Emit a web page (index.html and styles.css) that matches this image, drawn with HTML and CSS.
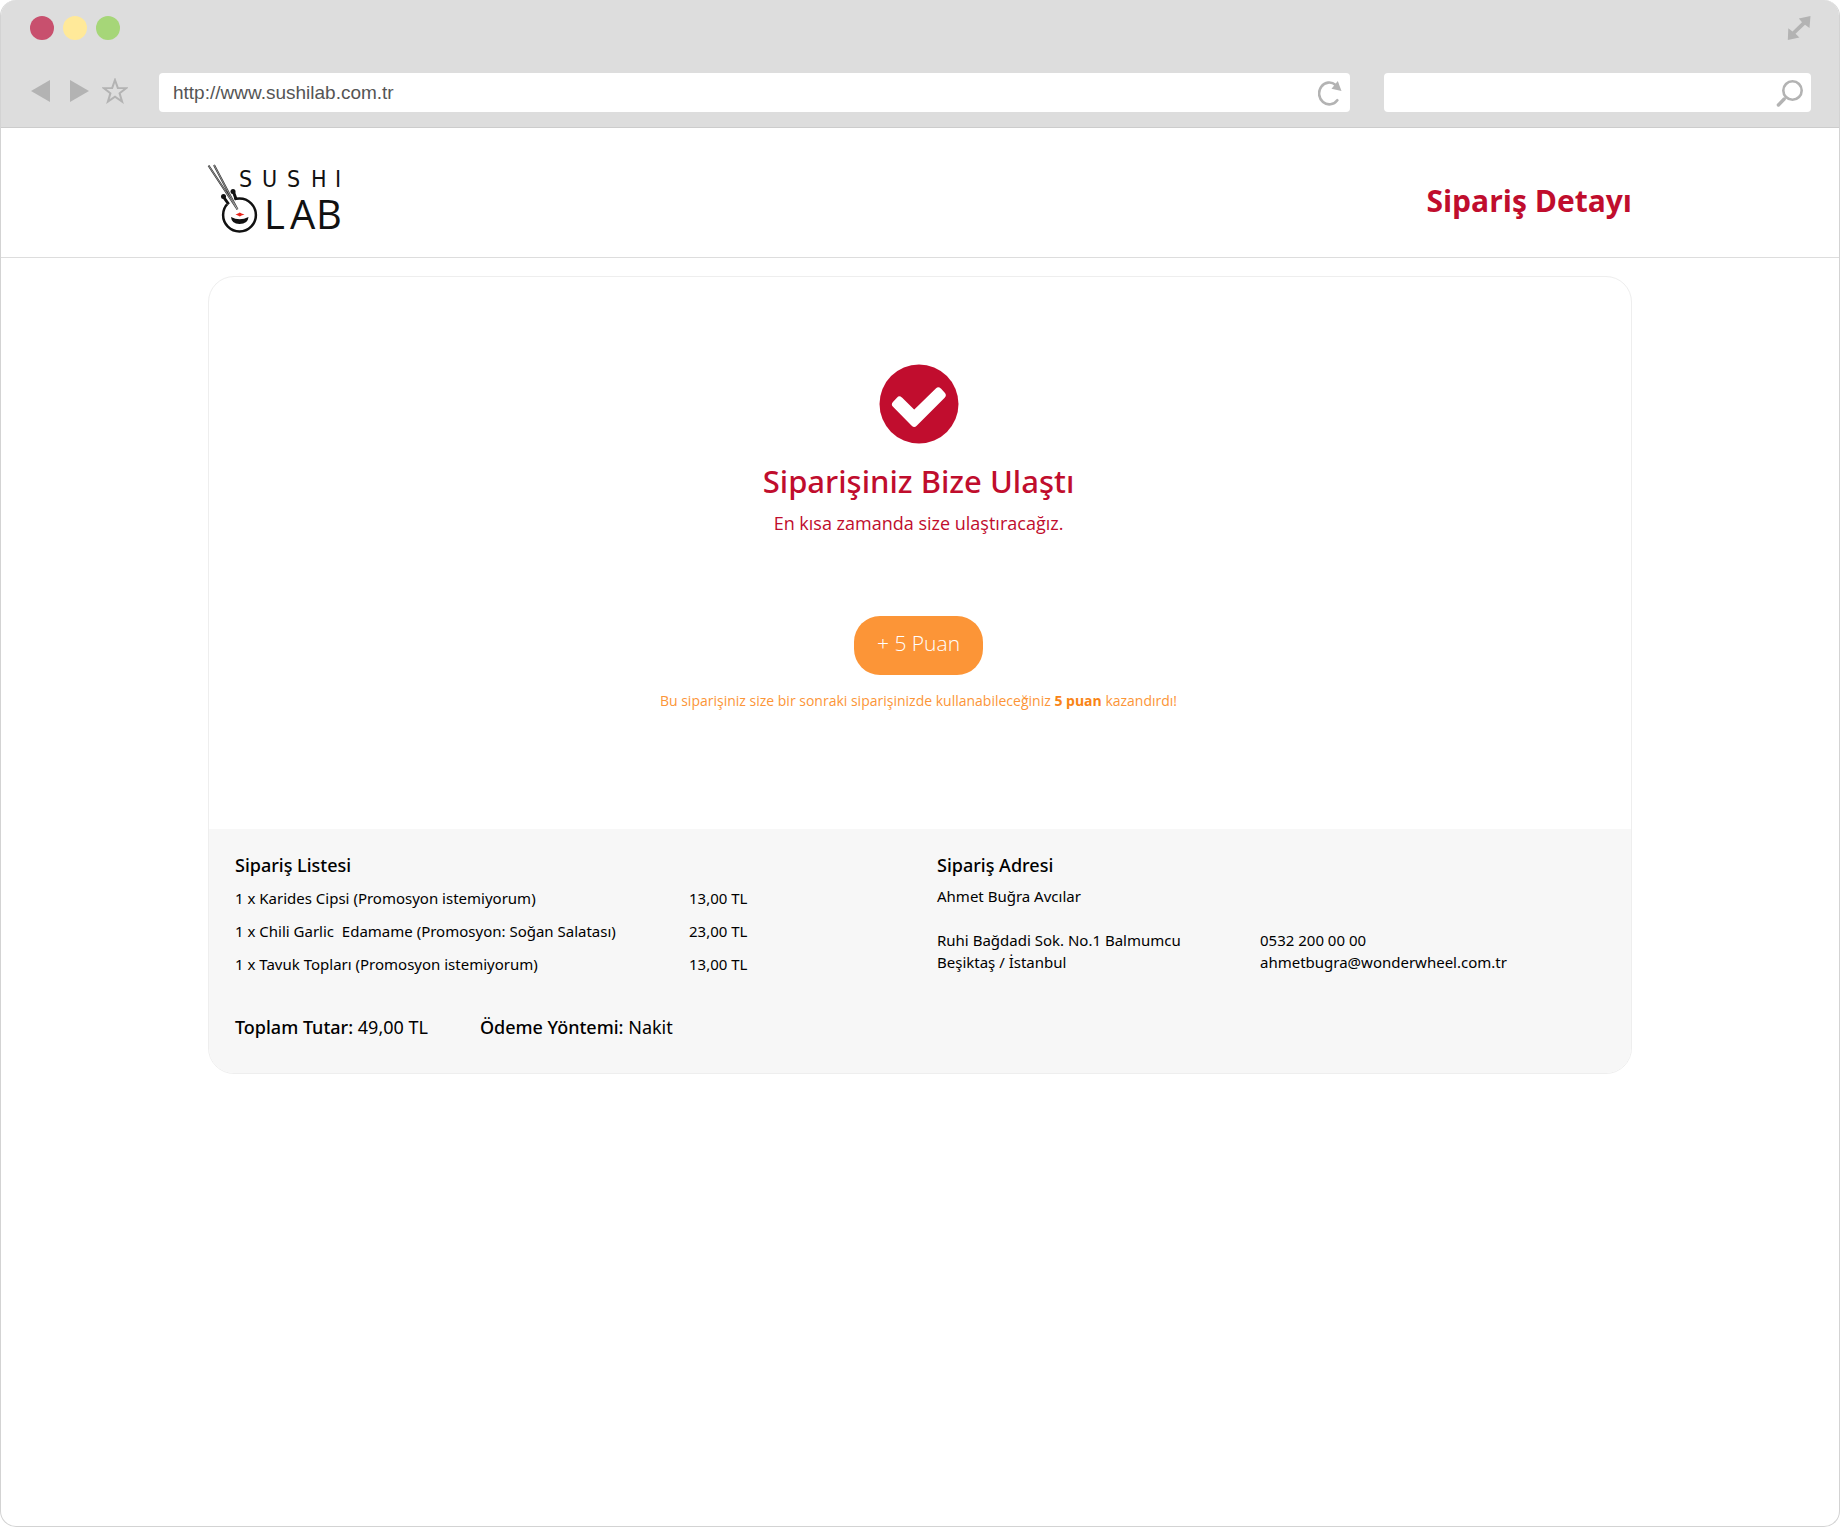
FILE: index.html
```html
<!DOCTYPE html>
<html lang="tr">
<head>
    <meta charset="UTF-8">
    <meta name="viewport" content="width=device-width, initial-scale=1.0">
    <title>Sushi Lab - Sipariş Detayı</title>
    <link rel="stylesheet" href="styles.css">
</head>
<body>
    <div class="window">
        <!-- Browser bar -->
        <div class="browser-bar">
            <div class="window-buttons">
                <button type="button" class="dot dot-close" aria-label="Kapat"></button>
                <button type="button" class="dot dot-minimize" aria-label="Küçült"></button>
                <button type="button" class="dot dot-zoom" aria-label="Büyüt"></button>
                <button type="button" class="icon-btn expand-btn" aria-label="Tam ekran">
                    <svg width="24" height="24" viewBox="0 0 24 24">
                        <path d="M23.5 0 L22.5 12 L18 8.7 L8.5 17.8 L12.4 21.5 L0.8 24 L1.3 12.2 L5.5 15.5 L15 6.2 L11.8 2.5 Z" fill="#b3b3b3"/>
                    </svg>
                </button>
            </div>
            <div class="navigation">
                <div class="nav-buttons">
                    <button type="button" class="icon-btn" aria-label="Geri">
                        <svg width="19" height="22" viewBox="0 0 19 22"><path d="M0 11 L19 0 V22 Z" fill="#b3b3b3"/></svg>
                    </button>
                    <button type="button" class="icon-btn" aria-label="İleri">
                        <svg width="19" height="22" viewBox="0 0 19 22"><path d="M19 11 L0 0 V22 Z" fill="#b3b3b3"/></svg>
                    </button>
                    <button type="button" class="icon-btn star-btn" aria-label="Yer imi">
                        <svg width="26" height="26" viewBox="0 0 26 26">
                            <path d="M13 2 L15.8 9.9 L24.2 10.1 L17.6 15.3 L20.1 23.6 L13 18.7 L5.9 23.6 L8.4 15.3 L1.8 10.1 L10.2 9.9 Z" fill="none" stroke="#b3b3b3" stroke-width="2"/>
                        </svg>
                    </button>
                </div>
                <div class="field address-field">
                    <input type="text" value="http://www.sushilab.com.tr" aria-label="Adres">
                    <button type="button" class="icon-btn" aria-label="Yenile">
                        <svg width="24" height="26" viewBox="0 0 24 26">
                            <path d="M19.3 20.2 A10.2 10.9 0 1 1 17.6 4.9" fill="none" stroke="#b3b3b3" stroke-width="2.6" stroke-linecap="round"/>
                            <path d="M19.8 1 L23.5 11 L13.5 8.8 Z" fill="#b3b3b3"/>
                        </svg>
                    </button>
                </div>
                <div class="field search-field">
                    <input type="text" aria-label="Ara">
                    <button type="button" class="icon-btn" aria-label="Ara">
                        <svg width="27" height="28" viewBox="0 0 27 28">
                            <circle cx="16.5" cy="11.5" r="9.2" fill="none" stroke="#b3b3b3" stroke-width="2.6"/>
                            <path d="M8.2 20 L2.4 26" stroke="#b3b3b3" stroke-width="3.4" stroke-linecap="round"/>
                        </svg>
                    </button>
                </div>
            </div>
        </div>

        <!-- Site header -->
        <header class="site-header">
            <div class="container header-inner">
                <a href="#" class="logo" aria-label="Sushi Lab">
                    <svg width="136" height="72" viewBox="0 0 136 72">
                        <!-- bowl -->
                        <circle cx="31.5" cy="50" r="16.4" fill="none" stroke="#111" stroke-width="2.5"/>
                        <path d="M17.5 36.5 L25.5 32.5" stroke="#fff" stroke-width="7"/>
                        <path d="M15.5 32 L20.5 39 M25.5 27 L28 34" fill="none" stroke="#111" stroke-width="3"/>
                        <circle cx="15.5" cy="31.5" r="2.5" fill="#111"/>
                        <circle cx="25" cy="26.5" r="2.5" fill="#111"/>
                        <path d="M23 52 Q31.5 56.5 40.5 52 Q40 59 31.5 59 Q23.5 59 23 52 Z" fill="#111"/>
                        <path d="M27.5 49.5 L30 48.5 L31.8 47.5 L33.5 48.5 L36.5 49.5 L33.5 50.5 L31.8 51.5 L30 50.5 Z" fill="#e8251c"/>
                        <!-- chopsticks -->
                        <path d="M0.5 0.5 L29.5 44.5 M6 0 L29.5 44.5" fill="none" stroke="#333" stroke-width="2"/>
                        <path d="M0.5 0.5 L29.5 44.5 M6 0 L29.5 44.5" fill="none" stroke="#ccc" stroke-width="0.6"/>
                        <text class="logo-sushi" y="22" x="31 54 79 103 127">SUSHI</text>
                        <text class="logo-lab" y="64" x="56 82 108">LAB</text>
                    </svg>
                </a>
                <h1>Sipariş Detayı</h1>
            </div>
        </header>

        <!-- Order details -->
        <main class="container order-card">
            <section class="order-status">
                <svg class="status-icon" width="80" height="80" viewBox="0 0 80 80">
                    <circle cx="40" cy="40" r="39.5" fill="#c10d2e"/>
                    <path d="M20.5 36 L35.2 50.6 L59.3 26.9 L63.2 31.2 L35.2 59.3 L16.5 40.4 Z" fill="#fff" stroke="#fff" stroke-width="7" stroke-linejoin="round"/>
                </svg>
                <h2>Siparişiniz Bize Ulaştı</h2>
                <p class="status-text">En kısa zamanda size ulaştıracağız.</p>
                <button type="button" class="points-btn">+ 5 Puan</button>
                <p class="points-text">Bu siparişiniz size bir sonraki siparişinizde kullanabileceğiniz <strong>5 puan</strong> kazandırdı!</p>
            </section>

            <section class="order-info">
                <div class="order-list">
                    <h3>Sipariş Listesi</h3>
                    <table>
                        <tbody>
                            <tr>
                                <td>1 x Karides Cipsi (Promosyon istemiyorum)</td>
                                <td class="price">13,00 TL</td>
                            </tr>
                            <tr>
                                <td>1 x Chili Garlic&nbsp; Edamame (Promosyon: Soğan Salatası)</td>
                                <td class="price">23,00 TL</td>
                            </tr>
                            <tr>
                                <td>1 x Tavuk Topları (Promosyon istemiyorum)</td>
                                <td class="price">13,00 TL</td>
                            </tr>
                        </tbody>
                    </table>
                    <div class="order-total">
                        <p><strong>Toplam Tutar:</strong> 49,00 TL</p>
                        <p><strong>Ödeme Yöntemi:</strong> Nakit</p>
                    </div>
                </div>
                <div class="order-address">
                    <h3>Sipariş Adresi</h3>
                    <p>Ahmet Buğra Avcılar</p>
                    <div class="address-columns">
                        <p>Ruhi Bağdadi Sok. No.1 Balmumcu<br>Beşiktaş / İstanbul</p>
                        <p>0532 200 00 00<br>ahmetbugra@wonderwheel.com.tr</p>
                    </div>
                </div>
            </section>
        </main>
    </div>
</body>
</html>
```

FILE: styles.css
```css
* {
    box-sizing: border-box;
}
body {
    font-family: "Open Sans", "Noto Sans", sans-serif;
    background-color: #fff;
    color: #000;
    margin: 0;
}
h1, h2, h3, p {
    margin: 0;
}
.window {
    min-height: 100vh;
    border: 1px solid #d3d3d3;
    border-top: none;
    border-radius: 16px;
    background-color: #fff;
    overflow: hidden;
}

/* Browser bar */
.browser-bar {
    background-color: #ddd;
    border-bottom: 1px solid #ccc;
    padding: 16px 28px 15px 29px;
}
.window-buttons {
    display: flex;
    align-items: center;
    gap: 9px;
}
.dot {
    width: 24px;
    height: 24px;
    padding: 0;
    border: none;
    border-radius: 50%;
}
.dot-close {
    background-color: #c8506e;
}
.dot-minimize {
    background-color: #ffe999;
}
.dot-zoom {
    background-color: #a6d678;
}
.icon-btn {
    display: flex;
    padding: 0;
    border: none;
    background: none;
    cursor: pointer;
}
.expand-btn {
    margin-left: auto;
}
.navigation {
    display: flex;
    align-items: center;
    margin-top: 33px;
}
.nav-buttons {
    display: flex;
    align-items: center;
    gap: 20px;
    width: 129px;
    padding: 0 0 4px 1px;
}
.star-btn {
    margin-left: -7px;
}
.field {
    display: flex;
    align-items: center;
    height: 39px;
    border-radius: 4px;
    background-color: #fff;
    padding: 0 8px 0 14px;
}
.field input {
    flex: 1;
    min-width: 0;
    padding: 0;
    border: none;
    outline: none;
    background: none;
    font-family: "Liberation Sans", Arial, sans-serif;
    font-size: 19px;
    color: #555;
}
.address-field {
    flex: 1;
}
.search-field {
    width: 24%;
    margin-left: 34px;
}

/* Site header */
.site-header {
    border-bottom: 1px solid #ddd;
}
.container {
    max-width: 1424px;
    margin: 0 auto;
}
.header-inner {
    display: flex;
    align-items: center;
    justify-content: space-between;
    height: 129px;
    padding-top: 16px;
}
.logo {
    display: flex;
}
.logo svg {
    overflow: visible;
}
.logo-sushi {
    font-family: "DejaVu Sans Condensed", "Roboto", sans-serif;
    font-size: 23px;
    font-weight: 200;
    fill: #111;
}
.logo-lab {
    font-size: 40px;
    fill: #111;
}
h1 {
    font-size: 30px;
    font-weight: 700;
    color: #c00d2d;
}

/* Order card */
.order-card {
    margin-top: 18px;
    border: 1px solid #eee;
    border-radius: 26px;
    overflow: hidden;
}
.order-status {
    display: flex;
    flex-direction: column;
    align-items: center;
    min-height: 552px;
    padding: 87px 3px 0 0;
    text-align: center;
    color: #c00d2d;
}
h2 {
    margin-top: 17px;
    font-family: "Noto Sans", "Open Sans", sans-serif;
    font-size: 31px;
    line-height: 40px;
    font-weight: 500;
}
.status-text {
    margin-top: 10px;
    font-size: 18px;
    line-height: 24px;
}
.points-btn {
    margin-top: 81px;
    height: 59px;
    padding: 0 23px 5px;
    border: none;
    border-radius: 26px;
    background-color: #fc9537;
    color: #fff;
    font-family: inherit;
    font-size: 21px;
    font-weight: 300;
    cursor: pointer;
}
.points-text {
    margin-top: 15px;
    font-size: 14px;
    line-height: 22px;
    color: #fc9537;
}
.points-text strong {
    color: #f98416;
}

/* Order info */
.order-info {
    display: grid;
    grid-template-columns: 702px 1fr;
    padding: 24px 26px 34px;
    background-color: #f7f7f7;
    font-family: "Noto Sans", "Open Sans", sans-serif;
    font-size: 15px;
}
h3 {
    font-size: 18px;
    line-height: 24px;
    font-weight: 500;
}
table {
    border-collapse: collapse;
    margin-top: 4px;
}
td {
    width: 454px;
    height: 33px;
    padding: 0;
}
td.price {
    width: auto;
}
.order-total {
    display: flex;
    gap: 52px;
    margin-top: 35px;
    font-size: 18px;
    line-height: 24px;
}
.order-total strong {
    font-weight: 500;
}
.order-address {
    line-height: 22px;
}
.order-address h3 {
    margin-bottom: 8px;
}
.address-columns {
    display: flex;
    margin-top: 22px;
}
.address-columns p {
    flex: 0 0 323px;
}
```
